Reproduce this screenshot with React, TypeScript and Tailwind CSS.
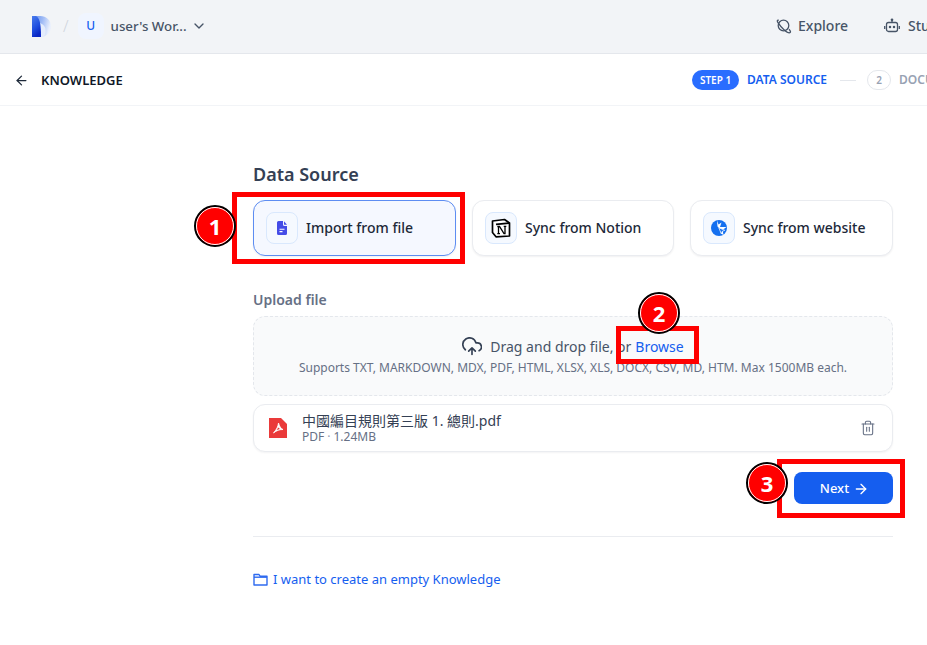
import React from "react";
import { ArrowLeft, ChevronDown, ArrowRight, Trash2 } from "lucide-react";

function Marker({ n, className }: { n: number; className: string }) {
  return (
    <div className={"absolute flex h-[42px] w-[42px] items-center justify-center rounded-full border-2 border-black bg-[#ff0000] text-[22px] font-bold text-white outline outline-1 outline-white -outline-offset-[3px] " + className}>
      {n}
    </div>
  );
}

function IconBox({ children }: { children: React.ReactNode }) {
  return (
    <div className="flex h-8 w-8 shrink-0 items-center justify-center rounded-lg border border-[#d9e8fd] bg-[#f5f9ff]">
      {children}
    </div>
  );
}

function SourceCard({ label, active, icon, className }: { label: string; active?: boolean; icon: React.ReactNode; className: string }) {
  return (
    <div className={"flex h-14 items-center gap-2 rounded-xl border px-3 shadow-[0_1px_2px_rgba(16,24,40,0.06)] " + className + (active ? " border-[#5d8df2] bg-[#f5f8ff]" : " border-[#eaecf0] bg-white")}>
      <IconBox>{icon}</IconBox>
      <span className="text-sm font-medium text-[#1d2939]">{label}</span>
    </div>
  );
}

export default function App() {
  return (
    <div className="relative h-[645px] w-[927px] overflow-hidden bg-white font-['Noto_Sans','Noto_Sans_CJK_TC',sans-serif]">
      <header className="flex h-[54px] items-center overflow-hidden border-b border-[#e4e7ec] bg-[#f2f4f7] pb-[1px]">
        <div className="flex w-[776px] shrink-0 items-center pl-8">
          <svg width="19" height="21" viewBox="0 0 19 21">
            <defs>
              <linearGradient id="lg" x1="0" y1="0" x2="1" y2="0.300">
                <stop offset="0" stopColor="#5f8cf0" />
                <stop offset="0.550" stopColor="#9db9f5" />
                <stop offset="1" stopColor="#eaf0fc" />
              </linearGradient>
              <linearGradient id="lg2" x1="0" y1="0" x2="0.400" y2="1">
                <stop offset="0" stopColor="#4a7cec" />
                <stop offset="0.600" stopColor="#1f4fe0" />
                <stop offset="1" stopColor="#0a27c4" />
              </linearGradient>
            </defs>
            <path d="M0 0H8C14.500 0 19 4.500 19 10.500C19 16.500 14.500 21 8 21H0Z" fill="url(#lg)" />
            <path d="M8 7C14 9 15 15 12 21H8Z" fill="#e4ecfc" />
            <path d="M0 0H4C7 2 9 5 9 21H0Z" fill="url(#lg2)" />
          </svg>
          <span className="ml-3 text-base font-light text-[#d0d5dd]">/</span>
          <div className="ml-[9px] flex h-[26px] w-[26px] items-center justify-center rounded-lg bg-[#f0f5ff] text-xs font-medium text-[#155eef]">U</div>
          <span className="ml-[7px] text-[13.300px] leading-5 font-medium text-[#475467]">user's Wor...</span>
          <ChevronDown className="ml-[4px] h-4 w-4 text-[#475467]" strokeWidth={2} />
        </div>
        <div className="flex w-[108px] shrink-0 items-center">
          <svg width="16" height="16" viewBox="0 0 16 16" fill="none" stroke="#475467" strokeWidth="1.300">
            <circle cx="7.500" cy="7.500" r="5.300" />
            <path d="M2.800 2.300C1.300 1.800 0.800 2.800 2 4.700C3.500 7 5.500 9.500 8 11.700C10.500 13.900 13.500 15.200 14.300 14.300C14.900 13.600 14 12.300 13 11.200" />
          </svg>
          <span className="ml-[6px] text-sm font-medium text-[#475467]">Explore</span>
        </div>
        <div className="flex shrink-0 items-center">
          <svg width="16" height="16" viewBox="0 0 16 16" fill="none" stroke="#475467" strokeWidth="1.300">
            <rect x="2.500" y="4.500" width="11" height="9" rx="2" />
            <path d="M8 4.500V2M0.700 8V11M15.300 8V11" />
            <circle cx="8" cy="1.800" r="0.700" fill="#475467" />
            <circle cx="6" cy="9" r="0.600" fill="#475467" />
            <circle cx="10" cy="9" r="0.600" fill="#475467" />
          </svg>
          <span className="ml-2 text-sm font-medium text-[#475467]">Studio</span>
        </div>
      </header>

      <div className="flex h-[52px] items-center overflow-hidden border-b border-[#f2f4f7] pt-[1px]">
        <div className="flex w-[692px] shrink-0 items-center pl-[14px]">
          <ArrowLeft className="h-[15px] w-[15px] text-[#1d2939]" strokeWidth={2} />
          <span className="mt-[1px] ml-3 text-[13px] font-semibold text-[#101828]">KNOWLEDGE</span>
        </div>
        <div className="flex shrink-0 items-center">
          <div className="flex h-5 w-[47px] items-center justify-center rounded-full bg-[#296dff] text-[10px] font-semibold text-white">STEP 1</div>
          <span className="ml-2 text-xs font-semibold text-[#155eef]">DATA SOURCE</span>
          <div className="ml-[13px] h-px w-4 bg-[#e4e7ec]" />
          <div className="ml-[11px] flex h-5 w-6 items-center justify-center rounded-full border border-[#e4e7ec] text-[10px] font-semibold text-[#98a2b3]">2</div>
          <span className="ml-2 text-xs font-semibold text-[#98a2b3]">DOCUMENT PROCESSING</span>
        </div>
      </div>

      <main className="ml-[253px] w-[640px]">
        <h1 className="mt-[54px] text-lg leading-7 font-semibold text-[#344054]">Data Source</h1>
        <div className="mt-3 flex">
          <SourceCard
            label="Import from file"
            active
            className="w-[203px]"
            icon={
              <svg width="16" height="16" viewBox="0 0 16 16">
                <path d="M3 2.500A1.500 1.500 0 0 1 4.500 1H9V4.500A1.500 1.500 0 0 0 10.500 6H13V13.500A1.500 1.500 0 0 1 11.500 15H4.500A1.500 1.500 0 0 1 3 13.500Z" fill="#444ce7" />
                <path d="M10 1.200L13 4.800H10.500Q10 4.800 10 4.300Z" fill="#444ce7" />
                <path d="M5.500 9.200H10.500M5.500 11.600H8.500" stroke="#fff" strokeWidth="1.100" />
              </svg>
            }
          />
          <SourceCard
            label="Sync from Notion"
            className="ml-[16px] w-[202px]"
            icon={
              <svg width="20" height="20" viewBox="0 0 20 20">
                <path d="M1.500 3L13.500 1.500L18.500 5V18L5 18.800L1.500 14.500Z" fill="#fff" stroke="#000" strokeWidth="1.700" strokeLinejoin="round" />
                <path d="M5 6.300L18 5.200" stroke="#000" strokeWidth="1.700" />
                <path d="M7.500 8.500V15.500M6.300 8.500H8.500L13 15.500H14V8.500M6.300 15.700H9M12.700 8.300H15.300" stroke="#000" strokeWidth="1.300" fill="none" />
              </svg>
            }
          />
          <SourceCard
            label="Sync from website"
            className="ml-[16px] w-[203px]"
            icon={
              <svg width="18" height="18" viewBox="0 0 18 18">
                <circle cx="9" cy="9" r="8" fill="#1570ef" />
                <path d="M7 1.500L8.500 5.500L11.500 3.500L10 8H16.500L12.500 11L13.500 16L11 14.500L9.500 9.500L7.500 7.500Z" fill="#fff" />
                <path d="M8.800 8.800L11.300 14.800L12.300 12.300L14.800 11.300Z" fill="#1570ef" stroke="#fff" strokeWidth="0.700" />
              </svg>
            }
          />
        </div>

        <div className="mt-[34px] text-sm leading-5 font-semibold text-[#667085]">Upload file</div>
        <div className="mt-[6px] flex h-20 flex-col items-center justify-center rounded-xl border border-dashed border-[#e4e7ec] bg-[#f9fafb] pt-[2px]">
          <div className="flex items-center text-sm leading-5 text-[#475467]">
            <svg width="20" height="20" viewBox="0 0 24 24" fill="none" stroke="#344054" strokeWidth="2" strokeLinecap="round" strokeLinejoin="round" className="mr-2">
              <path d="M12 13v8M8 17l4-4 4 4" />
              <path d="M20.500 16.500A5 5 0 0 0 18 7h-1.300A8 8 0 1 0 4 15.300" />
            </svg>
            <span>Drag and drop file, or</span>
            <span className="ml-1 text-[#155eef]">Browse</span>
          </div>
          <div className="mt-[2px] text-xs leading-[18px] text-[#667085]">Supports TXT, MARKDOWN, MDX, PDF, HTML, XLSX, XLS, DOCX, CSV, MD, HTM. Max 1500MB each.</div>
        </div>

        <div className="mt-2 flex h-12 items-center rounded-xl border border-[#eaecf0] bg-white pr-[16px] pl-[15px] shadow-[0_1px_2px_rgba(16,24,40,0.05)]">
          <svg width="18" height="20" viewBox="0 0 18 20" className="shrink-0">
            <path d="M0 0H12L18 6V20H0Z" fill="#ea3a3a" />
            <path d="M9.500 5C9 8 8 11 4.500 15C7.500 12.500 10.500 11.500 14 11.500C11.500 10.500 10.500 8 9.500 5Z" fill="#fff" stroke="#fff" strokeWidth="0.800" strokeLinejoin="round" />
            <path d="M9.200 9.500L7.800 12L11 11Z" fill="#ea3a3a" />
          </svg>
          <div className="ml-[15px] flex flex-1 flex-col gap-[1px]">
            <div className="text-sm leading-[17px] text-[#344054]">中國編目規則第三版 1. 總則.pdf</div>
            <div className="text-xs leading-[14px] text-[#667085]">PDF<span className="mx-[3px] text-[#98a2b3]">·</span>1.24MB</div>
          </div>
          <Trash2 className="h-4 w-4 text-[#667085]" strokeWidth={1.6} />
        </div>

        <div className="mt-5 flex justify-end">
          <button className="flex h-8 w-[99px] items-center justify-center gap-1 rounded-lg bg-[#155eef] pt-[1px] pl-[2px] text-[13px] font-medium text-white">
            Next
            <ArrowRight className="h-4 w-4" strokeWidth={2} />
          </button>
        </div>

        <div className="mt-8 h-px bg-[#eaecf0]" />

        <div className="mt-8 flex items-center text-[13px] leading-5 text-[#155eef]">
          <svg width="15" height="15" viewBox="0 0 15 15" fill="none" stroke="#2f6bf0" strokeWidth="1.400" className="mr-[5px]">
            <path d="M1 2.500H6L7 4.200H14V13H1Z" strokeLinejoin="round" />
            <path d="M1 5.200H14" />
          </svg>
          I want to create an empty Knowledge
        </div>
      </main>

      <div className="absolute top-[192px] left-[232px] h-[72px] w-[233px] border-[5px] border-[#ff0000]" />
      <div className="absolute top-[326px] left-[616px] h-[38px] w-[83px] border-[5px] border-[#ff0000]" />
      <div className="absolute top-[459px] left-[777px] h-[59px] w-[128px] border-[5px] border-[#ff0000]" />
      <Marker n={1} className="top-[205px] left-[194px]" />
      <Marker n={2} className="top-[292px] left-[638px]" />
      <Marker n={3} className="top-[462px] left-[746px]" />
    </div>
  );
}
